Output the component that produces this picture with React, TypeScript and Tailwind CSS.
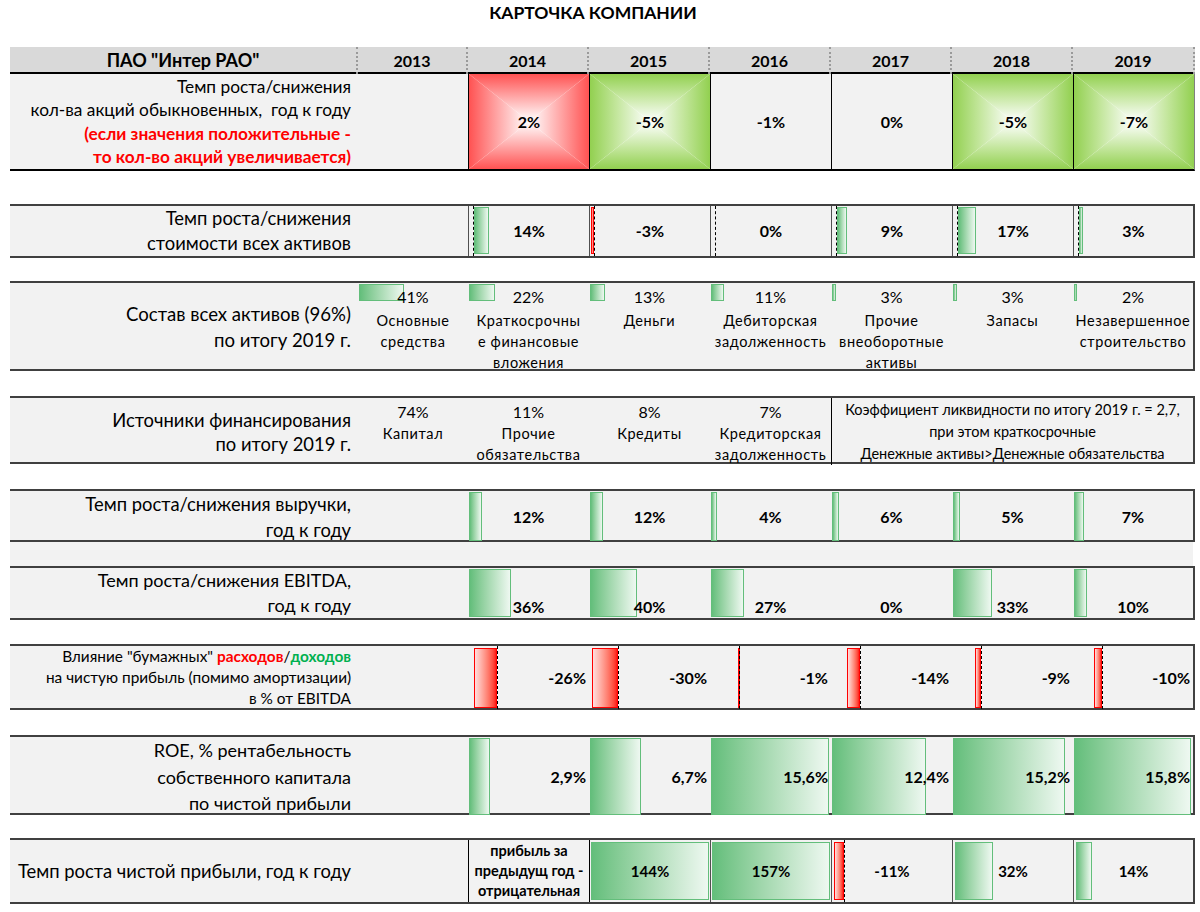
import React from "react";

const GRID = "grid grid-cols-[348px_110px_121px_121px_121px_121px_121px_1fr]";
const GREEN_BAR = "absolute border-[1.5px] border-[#63be7b] bg-linear-to-r from-[#63be7b] to-[#eef8f1]";
const RED_BAR = "absolute border-[1.5px] border-[#ff0000] bg-linear-to-r from-[#ffdede] to-[#ff1010]";

function Label({ children, cls }: { children: React.ReactNode; cls: string }) {
  return (
    <div className={`flex flex-col items-end justify-center pr-[7px] text-right whitespace-nowrap ${cls}`}>
      {children}
    </div>
  );
}

function Grad({ value, kind }: { value: string; kind: "red" | "green" }) {
  const red = kind === "red";
  return (
    <div className="relative flex items-center justify-center border-l border-black bg-white text-[16px] font-bold">
      <div
        className={`absolute inset-0 [clip-path:polygon(0_0,100%_0,50%_50%)] ${
          red
            ? "bg-[linear-gradient(to_bottom,#ff5252,#ffa0a0_22%,#ffe6e6_42%,#ffffff_50%)]"
            : "bg-[linear-gradient(to_bottom,#92d050,#c3e69c_22%,#eef8e4_42%,#ffffff_50%)]"
        }`}
      />
      <div
        className={`absolute inset-0 [clip-path:polygon(0_100%,100%_100%,50%_50%)] ${
          red
            ? "bg-[linear-gradient(to_top,#ff5252,#ffa0a0_22%,#ffe6e6_42%,#ffffff_50%)]"
            : "bg-[linear-gradient(to_top,#92d050,#c3e69c_22%,#eef8e4_42%,#ffffff_50%)]"
        }`}
      />
      <div
        className={`absolute inset-0 [clip-path:polygon(0_0,0_100%,50%_50%)] ${
          red
            ? "bg-[linear-gradient(to_right,#ff5252,#ffa0a0_22%,#ffe6e6_42%,#ffffff_50%)]"
            : "bg-[linear-gradient(to_right,#92d050,#c3e69c_22%,#eef8e4_42%,#ffffff_50%)]"
        }`}
      />
      <div
        className={`absolute inset-0 [clip-path:polygon(100%_0,100%_100%,50%_50%)] ${
          red
            ? "bg-[linear-gradient(to_left,#ff5252,#ffa0a0_22%,#ffe6e6_42%,#ffffff_50%)]"
            : "bg-[linear-gradient(to_left,#92d050,#c3e69c_22%,#eef8e4_42%,#ffffff_50%)]"
        }`}
      />
      <span className="relative">{value}</span>
    </div>
  );
}

function Plain({ value }: { value: string }) {
  return (
    <div className="flex items-center justify-center border-l border-black text-[16px] font-bold">{value}</div>
  );
}

type Cell2 = { v: string; pos?: number; neg?: number };

function AxisCell({ c }: { c: Cell2 }) {
  return (
    <div className="relative flex items-center justify-center border-l border-[#505050] text-[16px] font-bold">
      <div className="absolute top-0 bottom-0 left-[4px] border-l border-dashed border-black" />
      {c.pos ? <div className={`${GREEN_BAR} top-[1px] bottom-[2px] left-[5px]`} style={{ width: c.pos }} /> : null}
      {c.neg ? <div className={`${RED_BAR} top-[1px] bottom-[2px]`} style={{ width: c.neg, left: 4 - c.neg }} /> : null}
      <span className="relative">{c.v}</span>
    </div>
  );
}

function Comp({ pct, bar, lines }: { pct: string; bar: number; lines: string[] }) {
  return (
    <div className="relative flex flex-col items-center pt-[4px]">
      <div className={`${GREEN_BAR} top-[1px] left-[1px] h-[17px]`} style={{ width: bar }} />
      <span className="relative text-[16px] leading-[20px]">{pct}</span>
      <div className="mt-[3px] flex flex-col items-center text-[14.5px] leading-[21px] tracking-[0.6px] whitespace-nowrap">
        {lines.map((l, i) => (
          <span key={i}>{l}</span>
        ))}
      </div>
    </div>
  );
}

function Fin({ pct, lines }: { pct: string; lines: string[] }) {
  return (
    <div className="flex flex-col items-center pt-[4px]">
      <span className="text-[16px] leading-[20px]">{pct}</span>
      <div className="mt-[1px] flex flex-col items-center text-[14.5px] leading-[21px] tracking-[0.6px] whitespace-nowrap">
        {lines.map((l, i) => (
          <span key={i}>{l}</span>
        ))}
      </div>
    </div>
  );
}

export default function App() {
  const years = ["2013", "2014", "2015", "2016", "2017", "2018", "2019"];
  const row2: Cell2[] = [
    { v: "14%", pos: 15 },
    { v: "-3%", neg: 3 },
    { v: "0%" },
    { v: "9%", pos: 10 },
    { v: "17%", pos: 18 },
    { v: "3%", pos: 4 },
  ];
  const row5 = [
    { v: "12%", w: 13 },
    { v: "12%", w: 13 },
    { v: "4%", w: 6 },
    { v: "6%", w: 7 },
    { v: "5%", w: 7 },
    { v: "7%", w: 10 },
  ];
  const row6 = [
    { v: "36%", w: 42 },
    { v: "40%", w: 47 },
    { v: "27%", w: 33 },
    { v: "0%", w: 0 },
    { v: "33%", w: 39 },
    { v: "10%", w: 13 },
  ];
  const row7 = [
    { v: "-26%", w: 23 },
    { v: "-30%", w: 26 },
    { v: "-1%", w: 1 },
    { v: "-14%", w: 13 },
    { v: "-9%", w: 6 },
    { v: "-10%", w: 8 },
  ];
  const row8 = [
    { v: "2,9%", w: 21 },
    { v: "6,7%", w: 51 },
    { v: "15,6%", w: 118 },
    { v: "12,4%", w: 94 },
    { v: "15,2%", w: 112 },
    { v: "15,8%", w: 117 },
  ];

  return (
    <div className="w-[1200px] h-[912px] bg-white text-black font-[Lato,sans-serif] overflow-hidden">
      <div className="h-[47px] pt-[2px] pr-[14px] text-center text-[17.5px] leading-[22px] font-bold">
        КАРТОЧКА КОМПАНИИ
      </div>
      <div className="ml-[10px] w-[1185px]">
        {/* header */}
        <div className={`${GRID} h-[27px] bg-[#d9d9d9] border-b-2 border-black text-[16px] font-bold`}>
          <div className="flex items-center justify-center border-r-2 border-dotted border-[#9a9a9a] text-[18px]">
            ПАО "Интер РАО"
          </div>
          {years.map((y) => (
            <div key={y} className="flex items-center justify-center border-r-2 border-dotted border-[#9a9a9a]">
              {y}
            </div>
          ))}
        </div>

        {/* row 1 */}
        <div className={`${GRID} h-[97px] bg-[#f2f2f2] border-b-2 border-black border-r border-r-[#808080]`}>
          <Label cls="text-[17.3px] leading-[23.5px]">
            <span>Темп роста/снижения</span>
            <span>кол-ва акций обыкновенных,&nbsp; год к году</span>
            <span className="font-bold text-[#ff0000]">(если значения положительные -</span>
            <span className="font-bold text-[#ff0000]">то кол-во акций увеличивается)</span>
          </Label>
          <div />
          <Grad kind="red" value="2%" />
          <Grad kind="green" value="-5%" />
          <Plain value="-1%" />
          <Plain value="0%" />
          <Grad kind="green" value="-5%" />
          <Grad kind="green" value="-7%" />
        </div>

        <div className="h-[33px]" />

        {/* row 2 */}
        <div className={`${GRID} h-[54px] bg-[#f2f2f2] border-y-2 border-r-2 border-[#404040]`}>
          <Label cls="text-[18.4px] leading-[25px]">
            <span>Темп роста/снижения</span>
            <span>стоимости всех активов</span>
          </Label>
          <div />
          {row2.map((c, i) => (
            <AxisCell key={i} c={c} />
          ))}
        </div>

        <div className="h-[23px]" />

        {/* row 3 */}
        <div className={`${GRID} h-[90px] bg-[#f2f2f2] border-y-2 border-r-2 border-[#404040]`}>
          <Label cls="text-[18.6px] leading-[26px] pb-[2px]">
            <span>Состав всех активов (96%)</span>
            <span>по итогу 2019 г.</span>
          </Label>
          <Comp pct="41%" bar={45} lines={["Основные", "средства"]} />
          <Comp pct="22%" bar={26} lines={["Краткосрочны", "е финансовые", "вложения"]} />
          <Comp pct="13%" bar={15} lines={["Деньги"]} />
          <Comp pct="11%" bar={13} lines={["Дебиторская", "задолженность"]} />
          <Comp pct="3%" bar={4} lines={["Прочие", "внеоборотные", "активы"]} />
          <Comp pct="3%" bar={4} lines={["Запасы"]} />
          <Comp pct="2%" bar={3} lines={["Незавершенное", "строительство"]} />
        </div>

        <div className="h-[25px]" />

        {/* row 4 */}
        <div className={`${GRID} h-[68px] bg-[#f2f2f2] border-y-2 border-r-2 border-[#404040]`}>
          <Label cls="text-[18.4px] leading-[24px]">
            <span>Источники финансирования</span>
            <span>по итогу 2019 г.</span>
          </Label>
          <Fin pct="74%" lines={["Капитал"]} />
          <Fin pct="11%" lines={["Прочие", "обязательства"]} />
          <Fin pct="8%" lines={["Кредиты"]} />
          <Fin pct="7%" lines={["Кредиторская", "задолженность"]} />
          <div className="col-span-3 flex flex-col items-center border-l border-black pt-[1px] text-[14.5px] leading-[22px] whitespace-nowrap">
            <span>Коэффициент ликвидности по итогу 2019 г. = 2,7,</span>
            <span>при этом краткосрочные</span>
            <span>Денежные активы&gt;Денежные обязательства</span>
          </div>
        </div>

        <div className="h-[25px]" />

        {/* row 5 */}
        <div className={`${GRID} h-[53px] bg-[#f2f2f2] border-y-2 border-r-2 border-[#404040]`}>
          <Label cls="text-[18.4px] leading-[26px]">
            <span>Темп роста/снижения выручки,</span>
            <span>год к году</span>
          </Label>
          <div />
          {row5.map((c, i) => (
            <div key={i} className="relative flex items-center justify-center text-[16px] font-bold">
              <div className={`${GREEN_BAR} top-[1px] bottom-[2px] left-[1px]`} style={{ width: c.w }} />
              <span className="relative">{c.v}</span>
            </div>
          ))}
        </div>

        <div className="h-[24px] w-[1183px] bg-[#f2f2f2]" />

        {/* row 6 */}
        <div className={`${GRID} h-[54px] bg-[#f2f2f2] border-y-2 border-r-2 border-[#404040]`}>
          <Label cls="text-[18px] leading-[25px]">
            <span>Темп роста/снижения EBITDA,</span>
            <span>год к году</span>
          </Label>
          <div />
          {row6.map((c, i) => (
            <div key={i} className="relative flex items-end justify-center pb-[1px] text-[16px] leading-[20px] font-bold">
              {c.w ? <div className={`${GREEN_BAR} top-[1px] bottom-[1px] left-[1px]`} style={{ width: c.w }} /> : null}
              <span className="relative">{c.v}</span>
            </div>
          ))}
        </div>

        <div className="h-[24px]" />

        {/* row 7 */}
        <div className={`${GRID} h-[66px] bg-[#f2f2f2] border-y-2 border-r-2 border-[#404040]`}>
          <Label cls="text-[15.4px] leading-[21px]">
            <span>
              Влияние "бумажных" <span className="font-bold text-[#ff0000]">расходов</span>/
              <span className="font-bold text-[#00b050]">доходов</span>
            </span>
            <span>на чистую прибыль (помимо амортизации)</span>
            <span>в % от EBITDA</span>
          </Label>
          <div />
          {row7.map((c, i) => (
            <div key={i} className="relative flex items-center justify-end pr-[3px] text-[16px] font-bold">
              <div className={`${RED_BAR} top-[2px] bottom-[1px]`} style={{ width: c.w, left: 29 - c.w }} />
              <div className="absolute top-0 bottom-0 left-[29px] border-l border-dashed border-black" />
              <span className="relative">{c.v}</span>
            </div>
          ))}
        </div>

        <div className="h-[25px]" />

        {/* row 8 */}
        <div className={`${GRID} h-[80px] bg-[#f2f2f2] border-y-2 border-r-2 border-[#404040]`}>
          <Label cls="text-[18px] leading-[26.5px]">
            <span>ROE, % рентабельность</span>
            <span>собственного капитала</span>
            <span>по чистой прибыли</span>
          </Label>
          <div />
          {row8.map((c, i) => (
            <div key={i} className="relative flex items-center justify-end pr-[3px] text-[16px] font-bold">
              <div className={`${GREEN_BAR} top-[1px] bottom-[2px] left-[1px]`} style={{ width: c.w }} />
              <span className="relative">{c.v}</span>
            </div>
          ))}
        </div>

        <div className="h-[23px]" />

        {/* row 9 */}
        <div className={`${GRID} h-[66px] bg-[#f2f2f2] border-y-2 border-r-2 border-[#404040]`}>
          <Label cls="text-[18.4px] leading-[26px]">
            <span>Темп роста чистой прибыли, год к году</span>
          </Label>
          <div />
          <div className="flex flex-col items-center justify-center border-l border-black text-[14.5px] leading-[20px] font-bold whitespace-nowrap">
            <span>прибыль за</span>
            <span>предыдущ год -</span>
            <span>отрицательная</span>
          </div>
          <div className="relative flex items-center justify-center border-l border-black text-[15px] font-bold">
            <div className={`${GREEN_BAR} top-[2px] bottom-[2px] left-[1px] right-[1px]`} />
            <span className="relative">144%</span>
          </div>
          <div className="relative flex items-center justify-center border-l border-[#505050] text-[15px] font-bold">
            <div className={`${GREEN_BAR} top-[2px] bottom-[2px] left-[1px] right-[1px]`} />
            <span className="relative">157%</span>
          </div>
          <div className="relative flex items-center justify-center border-l border-[#505050] text-[15px] font-bold">
            <div className={`${RED_BAR} top-[2px] bottom-[2px] left-[2px] w-[10px]`} />
            <div className="absolute top-0 bottom-0 left-[12px] border-l border-dashed border-black" />
            <span className="relative">-11%</span>
          </div>
          <div className="relative flex items-center justify-center border-l border-[#505050] text-[15px] font-bold">
            <div className={`${GREEN_BAR} top-[2px] bottom-[2px] left-[2px] w-[38px]`} />
            <span className="relative">32%</span>
          </div>
          <div className="relative flex items-center justify-center border-l border-[#505050] text-[15px] font-bold">
            <div className={`${GREEN_BAR} top-[2px] bottom-[2px] left-[2px] w-[16px]`} />
            <span className="relative">14%</span>
          </div>
        </div>
      </div>
    </div>
  );
}
